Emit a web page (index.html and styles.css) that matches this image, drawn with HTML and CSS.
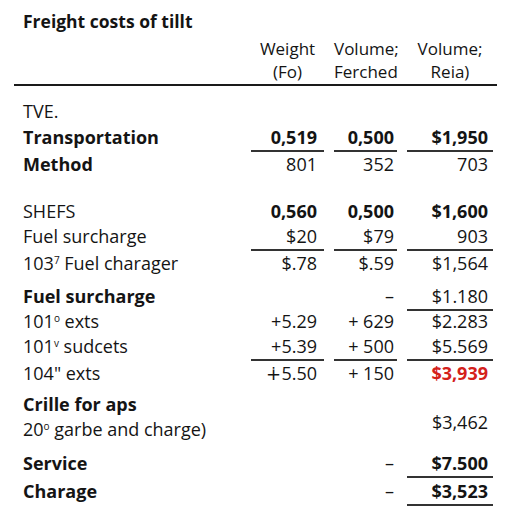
FILE: index.html
```html
<!DOCTYPE html>
<html>
<head>
<meta charset="utf-8">
<link rel="stylesheet" href="styles.css">
</head>
<body>
<div class="page">
  <h1 class="title">Freight costs of tillt</h1>
  <div class="row head">
    <div></div>
    <div class="h">Weight<br>(Fo)</div>
    <div class="h">Volume;<br>Ferched</div>
    <div class="h">Volume;<br>Reia)</div>
  </div>
  <div class="rule"></div>

  <div class="row m13"><div class="lab">TVE.</div><div></div><div></div><div></div></div>
  <div class="row m1 b"><div class="lab">Transportation</div><div class="c1 ul">0,519</div><div class="c2 ul">0,500</div><div class="c3 ul">$1,950</div></div>
  <div class="row"><div class="lab b">Method</div><div class="c1">801</div><div class="c2">352</div><div class="c3">703</div></div>

  <div class="row m22"><div class="lab">SHEFS</div><div class="c1 b">0,560</div><div class="c2 b">0,500</div><div class="c3 b">$1,600</div></div>
  <div class="row"><div class="lab">Fuel surcharge</div><div class="c1 ul">$20</div><div class="c2 ul">$79</div><div class="c3 ul">903</div></div>
  <div class="row"><div class="lab">103<sup>7</sup> Fuel charager</div><div class="c1">$.78</div><div class="c2">$.59</div><div class="c3">$1,564</div></div>

  <div class="row m8"><div class="lab b">Fuel surcharge</div><div class="c1"></div><div class="c2">–</div><div class="c3 ul">$1.180</div></div>
  <div class="row mn2"><div class="lab">101<sup>o</sup> exts</div><div class="c1">+5.29</div><div class="c2">+ 629</div><div class="c3">$2.283</div></div>
  <div class="row"><div class="lab">101<sup>v</sup> sudcets</div><div class="c1 ul">+5.39</div><div class="c2 ul">+ 500</div><div class="c3 ul">$5.569</div></div>
  <div class="row"><div class="lab">104" exts</div><div class="c1">∔5.50</div><div class="c2">+ 150</div><div class="c3 b red">$3,939</div></div>

  <div class="row two m6">
    <div class="lab"><div class="b">Crille for aps</div><div>20<sup>o</sup> garbe and charge)</div></div>
    <div class="c1"></div><div class="c2"></div><div class="c3 low">$3,462</div>
  </div>
  <div class="row m9"><div class="lab b">Service</div><div class="c1"></div><div class="c2">–</div><div class="c3 b ul">$7.500</div></div>
  <div class="row m1"><div class="lab b">Charage</div><div class="c1"></div><div class="c2">–</div><div class="c3 b ul">$3,523</div></div>
</div>
</body>
</html>
```
FILE: styles.css
```css
html, body {
  margin: 0;
  padding: 0;
  background: #ffffff;
}
body {
  font-family: "Open Sans", "Noto Sans", sans-serif;
  color: #141414;
  font-size: 18px;
}
.page {
  padding: 9px 15px 0 14px;
  width: 483px;
}
.title {
  margin: 0 0 4px 9px;
  font-size: 17.5px;
  line-height: 24px;
  font-weight: 700;
}
.row {
  display: grid;
  grid-template-columns: 227px 73px 63px 86px;
  column-gap: 10px;
  line-height: 25px;
  white-space: nowrap;
}
.head {
  font-size: 17px;
  line-height: 23.4px;
}
.h {
  text-align: center;
}
.rule {
  height: 2px;
  background: #1a1a1a;
  width: 483px;
}
.lab {
  padding-left: 9px;
}
.c1, .c2, .c3 {
  text-align: right;
}
.c1 { padding-right: 7px; }
.c2 { padding-right: 3px; }
.c3 { padding-right: 5px; }
.ul {
  border-bottom: 2px solid #333;
}
.b { font-weight: 700; }
.red { color: #d4211b; }
sup {
  font-size: 10px;
  line-height: 0;
  vertical-align: 6px;
}
.m13 { margin-top: 13px; }
.m1 { margin-top: 1px; }
.m22 { margin-top: 22px; }
.m8 { margin-top: 8px; }
.mn2 { margin-top: -2px; }
.m6 { margin-top: 6px; }
.m9 { margin-top: 9px; }
.two .low {
  align-self: start;
  margin-top: 18px;
}
```
